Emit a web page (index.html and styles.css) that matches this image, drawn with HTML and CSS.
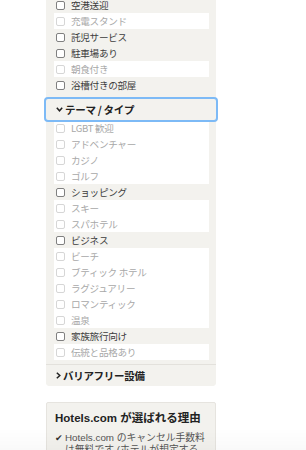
FILE: index.html
```html
<!DOCTYPE html>
<html lang="ja">
<head>
    <meta charset="UTF-8">
    <meta name="viewport" content="width=device-width, initial-scale=1.0">
    <title>絞り込み</title>
    <link rel="stylesheet" href="styles.css">
</head>
<body>
    <div class="filter-panel">
        <ul class="options">
            <li class="option"><span class="box"></span>空港送迎</li>
            <li class="option disabled"><span class="box"></span>充電スタンド</li>
            <li class="option"><span class="box"></span>託児サービス</li>
            <li class="option"><span class="box"></span>駐車場あり</li>
            <li class="option disabled"><span class="box"></span>朝食付き</li>
            <li class="option"><span class="box"></span>浴槽付きの部屋</li>
        </ul>

        <button class="group-head focused">
            <svg class="chev" width="7" height="5" viewBox="0 0 7 5"><polyline points="0.8,0.8 3.5,3.8 6.2,0.8" fill="none" stroke="#222" stroke-width="1.5"/></svg>
            テーマ / タイプ
        </button>
        <ul class="options">
            <li class="option disabled"><span class="box"></span>LGBT 歓迎</li>
            <li class="option disabled"><span class="box"></span>アドベンチャー</li>
            <li class="option disabled"><span class="box"></span>カジノ</li>
            <li class="option disabled"><span class="box"></span>ゴルフ</li>
            <li class="option"><span class="box"></span>ショッピング</li>
            <li class="option disabled"><span class="box"></span>スキー</li>
            <li class="option disabled"><span class="box"></span>スパホテル</li>
            <li class="option"><span class="box"></span>ビジネス</li>
            <li class="option disabled"><span class="box"></span>ビーチ</li>
            <li class="option disabled"><span class="box"></span>ブティック ホテル</li>
            <li class="option disabled"><span class="box"></span>ラグジュアリー</li>
            <li class="option disabled"><span class="box"></span>ロマンティック</li>
            <li class="option disabled"><span class="box"></span>温泉</li>
            <li class="option"><span class="box"></span>家族旅行向け</li>
            <li class="option disabled"><span class="box"></span>伝統と品格あり</li>
        </ul>

        <button class="group-head last">
            <svg class="chev" width="5" height="7" viewBox="0 0 5 7"><polyline points="0.8,0.8 3.8,3.5 0.8,6.2" fill="none" stroke="#222" stroke-width="1.5"/></svg>
            バリアフリー設備
        </button>
    </div>

    <div class="why-box">
        <h3>Hotels.com が選ばれる理由</h3>
        <ul class="reasons">
            <li><span class="tick">✔</span>Hotels.com のキャンセル手数料は無料です (ホテルが規定するキャンセル料は除く)</li>
        </ul>
    </div>
    <div class="bottom-fade"></div>
</body>
</html>
```

FILE: styles.css
```css
body {
    margin: 0;
    background: #fff;
    font-family: "Noto Sans CJK JP", "Liberation Sans", sans-serif;
    color: #333;
}

ul {
    list-style: none;
    margin: 0;
    padding: 0;
}

.filter-panel {
    width: 170px;
    margin: -3px 0 0 46px;
    background: #f3f2ee;
    border-radius: 0 0 4px 4px;
}

.options {
    padding: 0 7px 0 8px;
}

.option {
    display: flex;
    align-items: center;
    height: 16px;
    font-size: 9.6px;
    letter-spacing: -0.3px;
    color: #3c3c3c;
    white-space: nowrap;
}

.option .box {
    width: 7px;
    height: 7px;
    border: 1px solid #808080;
    border-radius: 2px;
    background: #fff;
    margin: 0 6px 0 2px;
    flex-shrink: 0;
}

.option.disabled {
    background: #fff;
    color: #a8a8a8;
}

.option.disabled .box {
    border-color: #d6d6d6;
}

.group-head {
    display: flex;
    align-items: center;
    width: 100%;
    height: 21px;
    margin-top: 6px;
    padding: 0 0 0 10px;
    border: none;
    background: #f3f2ee;
    font-family: inherit;
    font-size: 10.5px;
    font-weight: bold;
    letter-spacing: -0.3px;
    color: #222;
    text-align: left;
}

.group-head .chev {
    margin-right: 2px;
}

.focused {
    outline: 2px solid #7dbaf6;
    border-radius: 2px;
    position: relative;
}

.group-head.last {
    margin-top: 4px;
    border-top: 1px solid #e3e1dc;
    height: 22px;
    border-radius: 0 0 4px 4px;
}

.why-box {
    width: 170px;
    margin: 16px 0 0 46px;
    background: #f3f2ee;
    border: 1px solid #e6e4df;
    border-radius: 2px;
    padding: 6px 8px 10px;
    box-sizing: border-box;
    font-family: "Liberation Sans", "Noto Sans CJK JP", sans-serif;
}

.why-box h3 {
    margin: 0 0 7px;
    font-size: 11.5px;
    font-family: "Liberation Sans", "Noto Sans CJK JP", sans-serif;
    color: #222;
}

.reasons li {
    display: flex;
    font-size: 9.8px;
    line-height: 12px;
    color: #555;
}

.tick {
    width: 10px;
    flex-shrink: 0;
    color: #333;
    font-size: 9px;
}

.bottom-fade {
    position: fixed;
    left: 0;
    right: 0;
    bottom: 0;
    height: 22px;
    background: linear-gradient(rgba(0, 0, 0, 0), rgba(0, 0, 0, 0.025));
}
```
